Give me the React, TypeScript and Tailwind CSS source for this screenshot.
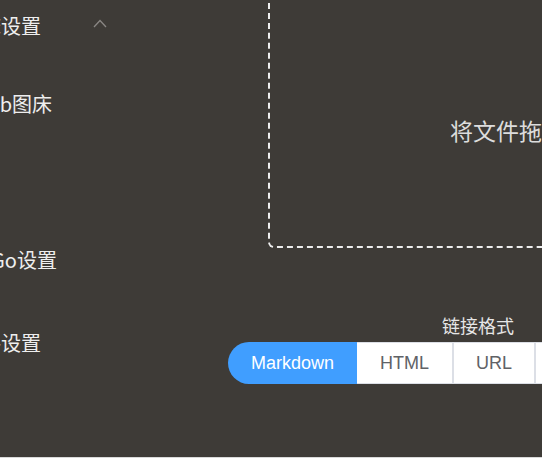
const cjk = 'font-["Noto_Sans_CJK_SC","Noto_Sans",sans-serif]';

export default function App() {
  return (
    <div className="flex h-[458px] w-[542px] overflow-hidden border-b border-[#d9d9d9] bg-[#3e3b37]">
      {/* sidebar, scrolled so labels are cut at the left edge */}
      <aside className={`w-[228px] shrink-0 overflow-hidden text-[20px] text-[#eeeeee] ${cjk}`}>
        <div className="flex h-[51px] items-center">
          <div className="flex w-[41px] justify-end whitespace-nowrap">图床设置</div>
          <svg className="ml-[52px] mt-[-5px]" width="14" height="9" viewBox="0 0 14 9" fill="none">
            <path d="M1 8 L7 1.5 L13 8" stroke="#8a8784" strokeWidth="1.3" />
          </svg>
        </div>
        <div className="mt-[27px] flex h-[52px] items-center">
          <div className="flex w-[52px] justify-end whitespace-nowrap">GitHub图床</div>
        </div>
        <div className="h-[52px]" />
        <div className="h-[52px]" />
        <div className="flex h-[52px] items-center">
          <div className="flex w-[57px] justify-end whitespace-nowrap">PicGo设置</div>
        </div>
        <div className="mt-[31px] flex h-[52px] items-center">
          <div className="flex w-[41px] justify-end whitespace-nowrap">插件设置</div>
        </div>
      </aside>

      {/* main */}
      <main className="flex w-[500px] shrink-0 flex-col items-center">
        <div className="ml-[40px] mt-[-40px] h-[288px] w-[580px] shrink-0 self-start rounded-md border-2 border-dashed border-[#eeeeee] pl-[180px] pt-[153px]">
          <div className={`whitespace-nowrap text-[23px] leading-[30px] text-[#dddddd] ${cjk}`}>
            将文件拖到此处，或 <span className="text-[#409eff]">点击上传</span>
          </div>
        </div>
        <div className={`mt-[65px] text-[18px] leading-[24px] text-[#e6e6e6] ${cjk}`}>链接格式</div>
        <div className='mt-[5px] flex h-[42px] font-["Liberation_Sans",Arial,sans-serif] text-[18px]'>
          <div className="flex w-[129px] items-center justify-center rounded-l-[21px] bg-[#409eff] text-white">Markdown</div>
          <div className="flex w-[95px] items-center justify-center border-y border-[#dcdfe6] bg-white text-[#606266]">HTML</div>
          <div className="flex w-[82px] items-center justify-center border-y border-l-2 border-[#dcdfe6] bg-white text-[#606266]">URL</div>
          <div className="flex w-[86px] items-center justify-center border-y border-l-2 border-[#dcdfe6] bg-white text-[#606266]">UBB</div>
          <div className="flex w-[108px] items-center justify-center rounded-r-[21px] border-y border-l-2 border-r border-[#dcdfe6] bg-white text-[#606266]">Custom</div>
        </div>
      </main>
    </div>
  );
}
